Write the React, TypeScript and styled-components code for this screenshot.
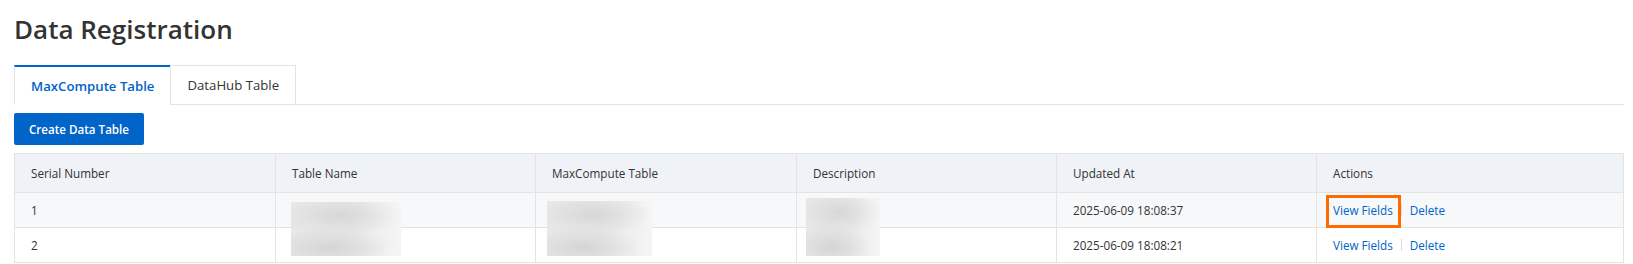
import React from 'react';
import styled, { createGlobalStyle } from 'styled-components';

const GlobalStyle = createGlobalStyle`
  html, body { margin: 0; padding: 0; background: #ffffff; }
  body {
    font-family: "Open Sans", "Noto Sans", Arial, sans-serif;
    color: #333333;
  }
  * { box-sizing: border-box; }
`;

const Page = styled.div`
  padding: 11px 9px 0 14px;
`;

const Title = styled.h1`
  margin: 0 0 18px 0;
  font-size: 26px;
  line-height: 36px;
  font-weight: 600;
  color: #333333;
`;

const TabBar = styled.div`
  display: flex;
  border-bottom: 1px solid #e3e3e3;
`;

const Tab = styled.div<{ $active?: boolean }>`
  height: 40px;
  margin-bottom: -1px;
  padding: 0 16px;
  display: flex;
  align-items: center;
  font-size: 13.2px;
  background: #ffffff;
  border: 1px solid #e3e3e3;
  border-top: ${(p) => (p.$active ? '2px solid #0064c8' : '1px solid #e3e3e3')};
  border-bottom-color: ${(p) => (p.$active ? '#ffffff' : '#e3e3e3')};
  color: ${(p) => (p.$active ? '#0064c8' : '#333333')};
  font-weight: ${(p) => (p.$active ? 600 : 400)};
  & + & {
    margin-left: -1px;
  }
`;

const PrimaryButton = styled.button`
  display: block;
  margin-top: 8px;
  height: 32px;
  width: 130px;
  padding: 0;
  border: none;
  border-radius: 2px;
  background: #0064c8;
  color: #ffffff;
  font-family: inherit;
  font-size: 11.6px;
  font-weight: 600;
`;

const Table = styled.div`
  margin-top: 8px;
  border-top: 1px solid #e3e3e3;
  border-left: 1px solid #e3e3e3;
  font-size: 11.7px;
`;

const Row = styled.div<{ $bg: string; $height: number }>`
  display: grid;
  grid-template-columns: 261px 260px 261px 260px 260px 1fr;
  height: ${(p) => p.$height}px;
  background: ${(p) => p.$bg};
`;

const Cell = styled.div`
  position: relative;
  display: flex;
  align-items: center;
  padding: 0 16px;
  border-right: 1px solid #e3e3e3;
  border-bottom: 1px solid #e3e3e3;
  color: #333333;
  white-space: nowrap;
`;

const HeadCell = styled(Cell)`
  font-weight: 400;
`;

const Redacted = styled.div<{ $left: number; $top: number; $w: number; $h: number }>`
  position: absolute;
  z-index: 1;
  left: ${(p) => p.$left}px;
  top: ${(p) => p.$top}px;
  width: ${(p) => p.$w}px;
  height: ${(p) => p.$h}px;
  background:
    radial-gradient(ellipse 55% 40% at 45% 25%, rgba(212, 212, 212, 0.85), rgba(212, 212, 212, 0) 100%),
    radial-gradient(ellipse 55% 40% at 35% 85%, rgba(208, 208, 208, 0.8), rgba(208, 208, 208, 0) 100%),
    linear-gradient(90deg, #e8e8e8 0%, #ebebeb 60%, #f5f5f5 100%);
`;

const Actions = styled.div`
  display: flex;
  align-items: center;
`;

const LinkButton = styled.a`
  position: relative;
  color: #0064c8;
  line-height: 18px;
  text-decoration: none;
  cursor: pointer;
`;

const Highlight = styled.span`
  position: absolute;
  left: -7px;
  right: -8px;
  top: -6px;
  bottom: -9px;
  border: 3px solid #ff6a00;
  pointer-events: none;
`;

const Divider = styled.span`
  width: 1px;
  height: 12px;
  margin: 0 8px;
  background: #dcdcdc;
`;

const rows = [
  { id: '1', updated: '2025-06-09 18:08:37', highlight: true, bg: '#f7f8fa' },
  { id: '2', updated: '2025-06-09 18:08:21', highlight: false, bg: '#ffffff' },
];

export default function App() {
  return (
    <>
      <GlobalStyle />
      <Page>
        <Title>Data Registration</Title>
        <TabBar>
          <Tab $active>MaxCompute Table</Tab>
          <Tab>DataHub Table</Tab>
        </TabBar>
        <PrimaryButton>Create Data Table</PrimaryButton>
        <Table>
          <Row $bg="#eff2f7" $height={39}>
            <HeadCell>Serial Number</HeadCell>
            <HeadCell>Table Name</HeadCell>
            <HeadCell>MaxCompute Table</HeadCell>
            <HeadCell>Description</HeadCell>
            <HeadCell>Updated At</HeadCell>
            <HeadCell>Actions</HeadCell>
          </Row>
          {rows.map((r, i) => (
            <Row key={r.id} $bg={r.bg} $height={35}>
              <Cell>{r.id}</Cell>
              <Cell>{i === 0 && <Redacted $left={15} $top={9} $w={110} $h={54} />}</Cell>
              <Cell>{i === 0 && <Redacted $left={11} $top={8} $w={105} $h={55} />}</Cell>
              <Cell>{i === 0 && <Redacted $left={9} $top={5} $w={74} $h={58} />}</Cell>
              <Cell>{r.updated}</Cell>
              <Cell>
                <Actions>
                  <LinkButton>
                    View Fields
                    {r.highlight && <Highlight />}
                  </LinkButton>
                  <Divider />
                  <LinkButton>Delete</LinkButton>
                </Actions>
              </Cell>
            </Row>
          ))}
        </Table>
      </Page>
    </>
  );
}
